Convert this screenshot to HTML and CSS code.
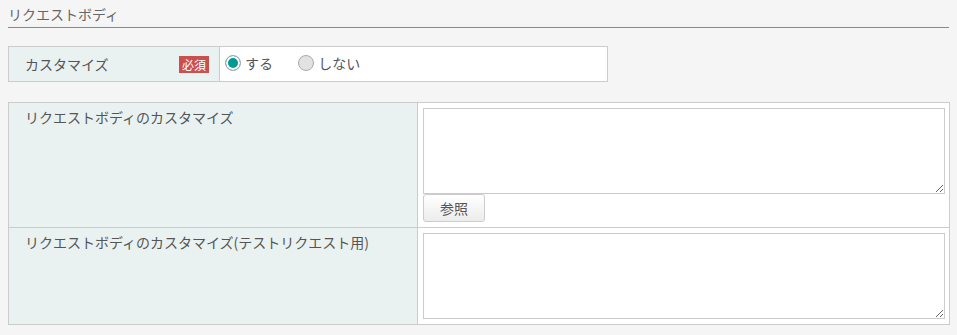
FILE: index.html
```html
<!DOCTYPE html>
<html lang="ja">
<head>
  <meta charset="UTF-8" />
  <title>リクエストボディ</title>
  <link rel="stylesheet" href="styles.css">
</head>
<body>
<h2 class="section-title">リクエストボディ</h2>

<table class="form-table form-small">
  <tr>
    <th>
      <div class="th-inner">
        <span>カスタマイズ</span>
        <span class="required">必須</span>
      </div>
    </th>
    <td>
      <label class="radio"><input type="radio" name="custom" checked><span>する</span></label>
      <label class="radio"><input type="radio" name="custom"><span>しない</span></label>
    </td>
  </tr>
</table>

<table class="form-table form-wide">
  <tr>
    <th>リクエストボディのカスタマイズ</th>
    <td>
      <textarea class="body-input"></textarea>
      <button class="ref-btn">参照</button>
    </td>
  </tr>
  <tr>
    <th>リクエストボディのカスタマイズ(テストリクエスト用)</th>
    <td>
      <textarea class="body-input"></textarea>
    </td>
  </tr>
</table>
</body>
</html>
```

FILE: styles.css
```css
body {
  margin: 0;
  padding: 0 8px;
  background: #f5f5f5;
  color: #555;
  font-family: "Noto Sans CJK JP", "Noto Sans", sans-serif;
  font-size: 14px;
}

.section-title {
  margin: 0;
  padding: 5px 0 4px 0;
  font-size: 14px;
  font-weight: normal;
  line-height: 18px;
  color: #666;
  border-bottom: 1px solid #888;
}

.form-table {
  border-collapse: collapse;
  table-layout: fixed;
  background: #fff;
}

.form-table th,
.form-table td {
  border: 1px solid #cccccc;
}

.form-table th {
  background: #e9f2f1;
  font-weight: normal;
  text-align: left;
  vertical-align: top;
  color: #555;
}

.form-small {
  margin-top: 18px;
  width: 600px;
}

.form-small th {
  width: 184px;
  height: 34px;
  padding: 0 10px 0 16px;
  vertical-align: middle;
}

.form-small td {
  padding: 0 5px;
}

.th-inner {
  display: flex;
  justify-content: space-between;
  align-items: center;
}

.required {
  display: inline-block;
  background: #c9504c;
  color: #fff;
  font-size: 12px;
  line-height: 17px;
  padding: 0 3px;
}

.radio {
  display: inline-flex;
  align-items: center;
  gap: 4px;
  margin-right: 22px;
  color: #555;
}

.radio input {
  appearance: none;
  margin: 0;
  width: 16px;
  height: 16px;
  border-radius: 50%;
  border: 1px solid #aaa;
  background: #e2e2e2;
}

.radio input:checked {
  background: #009a93;
  box-shadow: inset 0 0 0 2px #fff;
}

.form-wide {
  margin-top: 20px;
  width: 942px;
}

.form-wide th {
  width: 384px;
  padding: 4px 8px 8px 16px;
}

.form-wide td {
  padding: 5px 4px 5px 5px;
}

.body-input {
  display: block;
  box-sizing: border-box;
  width: 522px;
  height: 86px;
  margin: 0;
  border: 1px solid #ccc;
  background: #fff;
}

.ref-btn {
  display: block;
  margin-top: 0;
  width: 62px;
  height: 28px;
  border: 1px solid #ccc;
  border-radius: 3px;
  background: linear-gradient(#fff, #ececec);
  color: #555;
  font-family: inherit;
  font-size: 14px;
}
```
